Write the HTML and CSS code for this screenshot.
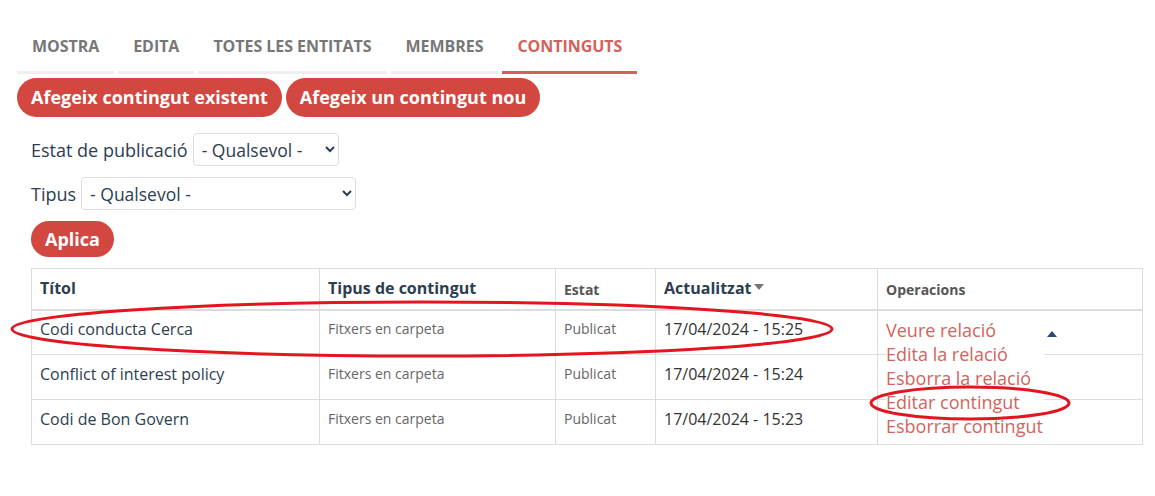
FILE: index.html
```html
<!DOCTYPE html>
<html lang="ca">
<head>
<meta charset="utf-8">
<title>Continguts</title>
<link rel="stylesheet" href="styles.css">
</head>
<body>
<div class="page">
  <nav class="tabs">
    <a class="tab" href="#">MOSTRA</a>
    <a class="tab" href="#">EDITA</a>
    <a class="tab" href="#">TOTES LES ENTITATS</a>
    <a class="tab" href="#">MEMBRES</a>
    <a class="tab active" href="#">CONTINGUTS</a>
  </nav>
  <div class="actions">
    <a class="btn" href="#">Afegeix contingut existent</a>
    <a class="btn" href="#">Afegeix un contingut nou</a>
  </div>
  <form class="filters">
    <div class="field">
      <label>Estat de publicació</label>
      <select class="sel sel-estat"><option>- Qualsevol -</option></select>
    </div>
    <div class="field">
      <label>Tipus</label>
      <select class="sel sel-tipus"><option>- Qualsevol -</option></select>
    </div>
    <div class="field">
      <button type="button" class="btn btn-apply">Aplica</button>
    </div>
  </form>
  <div class="table-wrap">
    <table class="grid">
      <colgroup>
        <col class="c1"><col class="c2"><col class="c3"><col class="c4"><col class="c5">
      </colgroup>
      <thead>
        <tr>
          <th>Títol</th>
          <th>Tipus de contingut</th>
          <th class="small">Estat</th>
          <th>Actualitzat<span class="sort"></span></th>
          <th class="small">Operacions</th>
        </tr>
      </thead>
      <tbody>
        <tr class="first">
          <td class="title">Codi conducta Cerca</td>
          <td class="muted">Fitxers en carpeta</td>
          <td class="muted">Publicat</td>
          <td class="date">17/04/2024 - 15:25</td>
          <td class="ops">
            <div class="dropbutton">
              <a href="#" class="op">Veure relació</a>
              <span class="toggle"></span>
              <ul class="menu">
                <li><a href="#" class="op">Edita la relació</a></li>
                <li><a href="#" class="op">Esborra la relació</a></li>
                <li><a href="#" class="op">Editar contingut</a></li>
                <li><a href="#" class="op">Esborrar contingut</a></li>
              </ul>
            </div>
          </td>
        </tr>
        <tr>
          <td class="title">Conflict of interest policy</td>
          <td class="muted">Fitxers en carpeta</td>
          <td class="muted">Publicat</td>
          <td class="date">17/04/2024 - 15:24</td>
          <td class="ops"></td>
        </tr>
        <tr>
          <td class="title">Codi de Bon Govern</td>
          <td class="muted">Fitxers en carpeta</td>
          <td class="muted">Publicat</td>
          <td class="date">17/04/2024 - 15:23</td>
          <td class="ops"></td>
        </tr>
      </tbody>
    </table>
    <svg class="mark mark-row" width="830" height="64" viewBox="0 0 830 64">
      <ellipse cx="415" cy="32" rx="410" ry="27" fill="none" stroke="#e3151e" stroke-width="3"/>
    </svg>
    <svg class="mark mark-op" width="206" height="42" viewBox="0 0 206 42">
      <ellipse cx="103" cy="21" rx="99" ry="16" fill="none" stroke="#e3151e" stroke-width="3"/>
    </svg>
  </div>
</div>
</body>
</html>
```

FILE: styles.css
```css
* { box-sizing: border-box; }
html, body { margin: 0; padding: 0; background: #fff; }
body {
  font-family: "Open Sans", "Noto Sans", "Liberation Sans", sans-serif;
  color: #2c3e50;
}
.page { padding: 0 17px; width: 1155px; }

.tabs { display: flex; gap: 4px; }
.tab {
  display: block;
  padding: 35px 15px 14px;
  line-height: 22px;
  font-size: 16px;
  font-weight: 700;
  color: #777;
  text-decoration: none;
  border-bottom: 3px solid #eee;
  letter-spacing: -0.05px;
}
.tab.active { color: #d3605a; border-bottom-color: #d3605a; }

.actions { display: flex; gap: 4px; margin-top: 4px; }
.btn {
  display: inline-block;
  background: #d2473f;
  color: #fff;
  font-family: inherit;
  font-weight: 700;
  font-size: 18px;
  line-height: 39px;
  height: 39px;
  padding: 0 14px;
  border-radius: 20px;
  border: 0;
  text-decoration: none;
}

.filters { padding-left: 14px; margin-top: 16px; display: flex; flex-direction: column; gap: 11px; }
.field { display: flex; align-items: center; gap: 5px; }
.field label { font-size: 18px; color: #2c3e50; }
.sel {
  height: 33px;
  font-family: inherit;
  font-size: 17.5px;
  color: #2c3e50;
  background: #fff;
  border: 1px solid #ddd;
  border-radius: 4px;
  padding: 0 4px;
}
.sel-estat { width: 146px; }
.sel-tipus { width: 275px; }
.btn-apply { height: 36px; line-height: 36px; padding: 0 14px; border-radius: 18px; }

.table-wrap { position: relative; margin-top: 11px; padding-left: 14px; }
.grid {
  border-collapse: collapse;
  table-layout: fixed;
  width: 1111px;
  border: 1px solid #ddd;
}
.c1 { width: 288px; } .c2 { width: 236px; } .c3 { width: 100px; } .c4 { width: 222px; } .c5 { width: 265px; }
.grid th {
  text-align: left;
  font-size: 16px;
  font-weight: 700;
  color: #2c3e50;
  padding: 8px 8px 10px;
  line-height: 22px;
  border: 1px solid #ddd;
  border-bottom: 2px solid #ddd;
  vertical-align: middle;
}
.grid th.small { font-size: 14px; color: #555; padding-top: 10px; padding-bottom: 8px; }
.sort {
  display: inline-block;
  width: 0; height: 0;
  margin-left: 2px;
  vertical-align: 4px;
  border-left: 5px solid transparent;
  border-right: 5px solid transparent;
  border-top: 6px solid #777;
}
.grid td {
  padding: 8px 8px 14px;
  line-height: 22px;
  border: 1px solid #ddd;
  vertical-align: top;
  font-size: 16px;
}
.grid tr.first td { padding-top: 7px; padding-bottom: 14px; }
.grid td.title { color: #2c3e50; }
.grid td.muted { font-size: 14px; color: #666; }
.grid td.date { color: #333; }
.dropbutton { position: relative; height: 22px; }
.op { color: #d3645c; text-decoration: none; font-size: 18px; line-height: 24px; white-space: nowrap; }
.dropbutton > .op { display: block; line-height: 24px; height: 22px; }
.toggle {
  position: absolute;
  left: 161px; top: 13px;
  width: 0; height: 0;
  border-left: 5px solid transparent;
  border-right: 5px solid transparent;
  border-bottom: 6px solid #2c4a6e;
}
.menu {
  position: absolute;
  left: 0; top: 24px;
  width: 158px;
  margin: 0; padding: 0;
  list-style: none;
  background: #fff;
  z-index: 2;
}
.menu li { line-height: 24px; height: 24px; }

.mark { position: absolute; z-index: 3; pointer-events: none; }
.mark-row { left: -10px; top: 29px; }
.mark-op { left: 850px; top: 114px; }
```
